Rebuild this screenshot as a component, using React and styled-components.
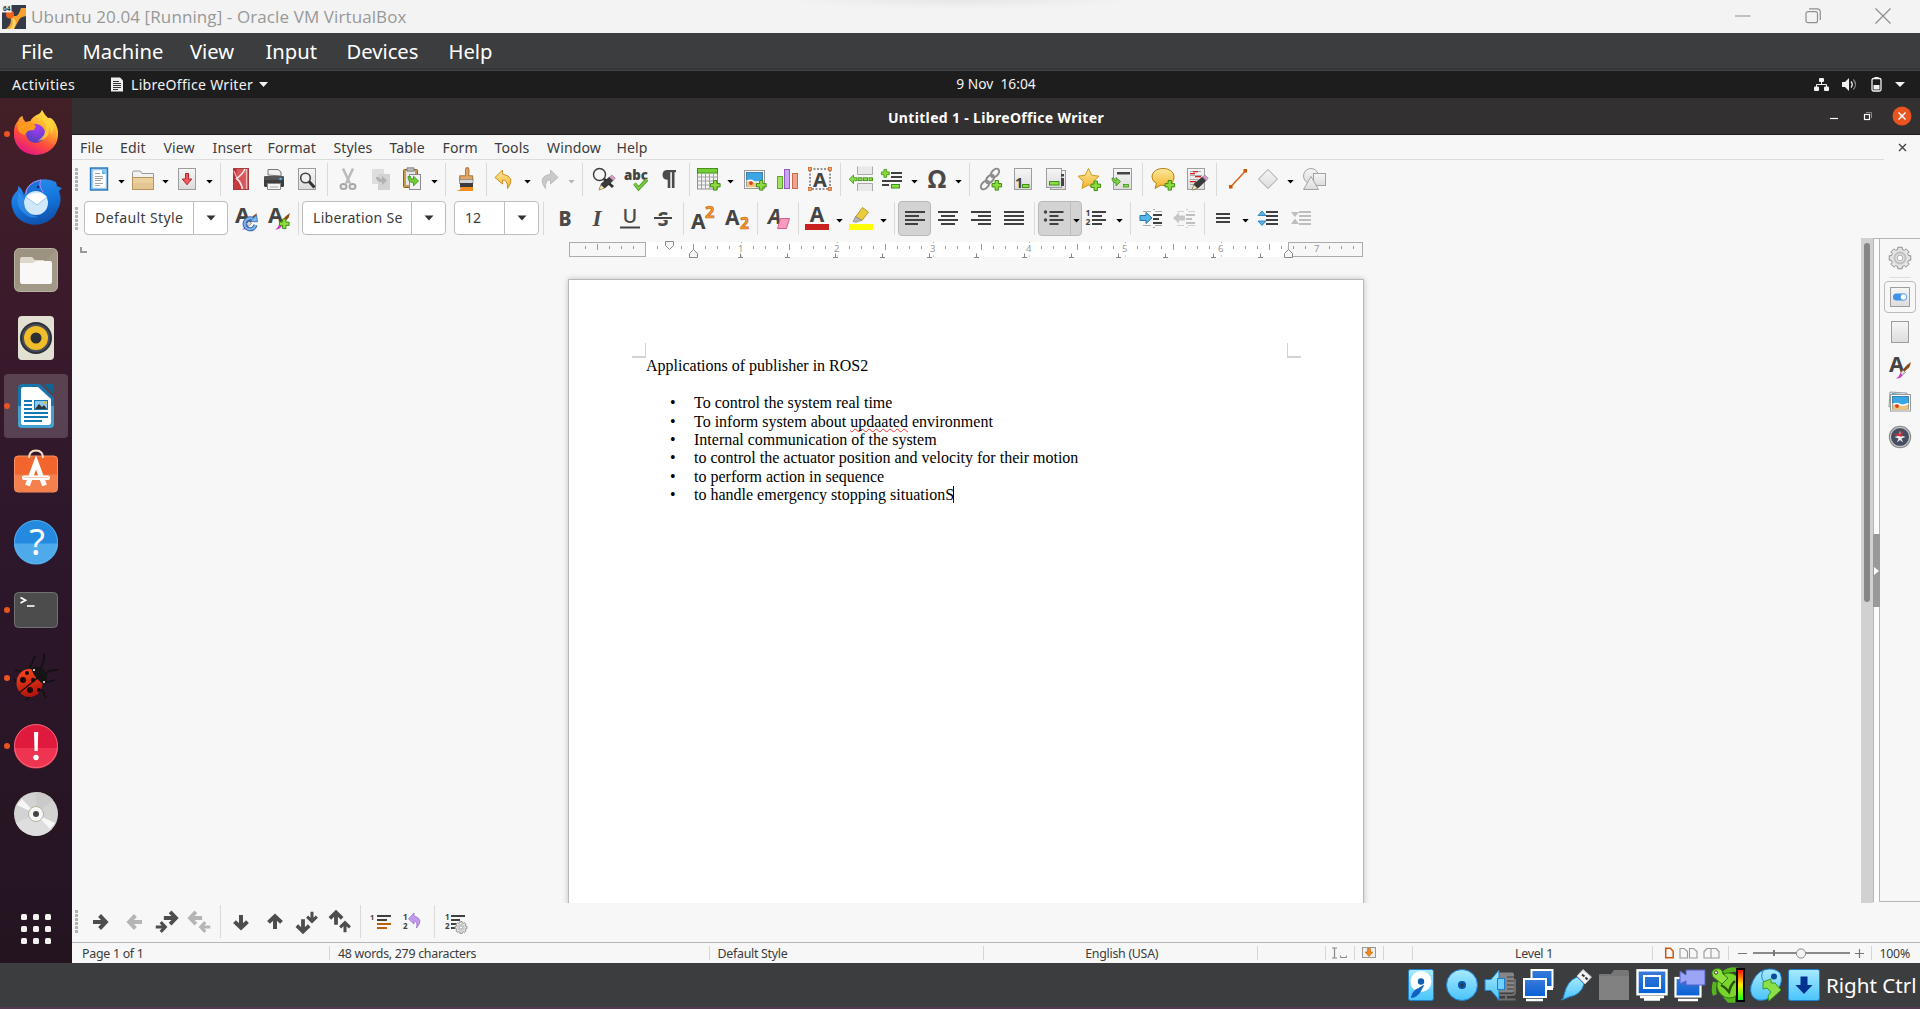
import React from "react";
import styled, { createGlobalStyle, css } from "styled-components";

const GlobalStyle = createGlobalStyle`
  *, *::before, *::after { box-sizing: border-box; }
  html, body { margin: 0; padding: 0; width: 1920px; height: 1009px; overflow: hidden; }
  svg { display: block; overflow: visible; flex: none; }
`;

const UI = `"Noto Sans", "Open Sans", sans-serif`;
const SERIF = `"Liberation Serif", "Times New Roman", serif`;

/* ---------- window frame ---------- */

const Screen = styled.div`
  width: 1920px;
  height: 1009px;
  display: flex;
  flex-direction: column;
  overflow: hidden;
  background: #3c3d3f;
  font-family: ${UI};
  white-space: nowrap;
`;

const HostTitle = styled.header`
  height: 33px;
  flex: none;
  display: flex;
  align-items: center;
  padding: 0 29px 0 2px;
  background: radial-gradient(ellipse 175px 9px at 960px 0, #e7e7e7, #f3f3f3);
  color: #989898;
`;

const HostTitleText = styled.span`
  flex: 1;
  margin-left: 5px;
  font: 17px/24px "Open Sans", ${UI};
  letter-spacing: 0.1px;
`;

const HostButtons = styled.div`
  display: flex;
  gap: 54px;
  margin-top: -2px;
`;

const HostMenu = styled.nav`
  height: 38px;
  flex: none;
  display: flex;
  align-items: center;
  padding: 0 0 2px 21px;
  background: linear-gradient(#3b3d3f 35px, #343637 35px, #343637 37px, #454443 37px);
  color: #fff;
`;

const HostMenuItem = styled.span`
  width: ${(p) => p.$w}px;
  font-size: 20.2px;
  line-height: 28px;
`;

const TopBar = styled.div`
  height: 27px;
  flex: none;
  display: grid;
  grid-template-columns: 1fr auto 1fr;
  align-items: center;
  background: #1d1d1d;
  color: #f2f2f2;
  font-size: 13.8px;
`;

const TopLeft = styled.div`
  display: flex;
  align-items: center;
  padding-left: 12px;
`;

const Activities = styled.span`
  width: 99px;
  font-size: 14.2px;
  letter-spacing: 0.4px;
`;

const AppName = styled.span`
  margin: 0 6px 0 8px;
  font-size: 14.1px;
  letter-spacing: 0.27px;
`;

const Clock = styled.span`
  white-space: pre;
  padding-left: 72px;
  margin-top: -2px;
`;

const TopRight = styled.div`
  display: flex;
  justify-content: flex-end;
  align-items: center;
  gap: 13.5px;
  padding-right: 15px;
`;

const Guest = styled.div`
  height: 865px;
  flex: none;
  display: flex;
`;

/* ---------- dock ---------- */

const Dock = styled.aside`
  width: 72px;
  flex: none;
  display: flex;
  flex-direction: column;
  align-items: center;
  gap: 4px;
  padding-top: 4px;
  background: linear-gradient(#431f27, #3a1a2b 25%, #2d172b 52%, #241420);
`;

const DockItem = styled.div`
  width: 64px;
  height: 64px;
  display: flex;
  align-items: center;
  justify-content: center;
  border-radius: 4px;
  background: ${(p) => (p.$active ? "rgba(255,255,255,0.18)" : "transparent")};
  position: relative;
  ${(p) =>
    p.$running &&
    css`
      &::before {
        content: "";
        position: absolute;
        left: 0;
        top: 29px;
        width: 6px;
        height: 6px;
        border-radius: 3px;
        background: #e95420;
      }
    `}
`;

const AppsGrid = styled.div`
  display: grid;
  grid-template-columns: repeat(3, 6px);
  gap: 6px;
  margin: auto 0 19px;
`;

const AppsDot = styled.i`
  height: 6px;
  border-radius: 1.5px;
  background: #f3f1ef;
`;

/* ---------- writer window ---------- */

const Writer = styled.main`
  width: 1848px;
  display: flex;
  flex-direction: column;
  background: #f7f7f7;
  color: #3c3c3c;
`;

const WriterTitle = styled.div`
  height: 37px;
  flex: none;
  display: grid;
  grid-template-columns: 1fr auto 1fr;
  align-items: center;
  background: #333031;
  border-bottom: 1px solid #1e1d1d;
  color: #fff;
`;

const WriterName = styled.span`
  grid-column: 2;
  margin-top: 2px;
  font-size: 14px;
  font-weight: 700;
  letter-spacing: 0.33px;
`;

const WriterButtons = styled.div`
  display: flex;
  justify-content: flex-end;
  align-items: center;
  padding-right: 8px;
`;

const MenuBar = styled.nav`
  height: 24px;
  flex: none;
  display: flex;
  align-items: center;
  padding-left: 8px;
`;

const MenuItem = styled.span`
  width: ${(p) => p.$w}px;
  font-size: 14.1px;
  line-height: 22px;
  letter-spacing: 0.1px;
  margin-top: 2px;
`;

const MenuClose = styled.span`
  margin-left: auto;
  padding-right: 13px;
`;

const MenuRule = styled.div`
  width: 1812px;
  height: 1px;
  flex: none;
  background: #dcdcdc;
`;

const Toolbar = styled.div`
  height: ${(p) => p.$h}px;
  flex: none;
  display: flex;
  align-items: center;
  padding: 0 0 ${(p) => p.$pb || 0}px 3px;
`;

const Slot = styled.span`
  margin-left: ${(p) => p.$gap}px;
  display: flex;
  align-items: center;
  justify-content: center;
`;

const Grip = styled.span`
  width: 3px;
  height: 23px;
  background: repeating-linear-gradient(#b4b4b4 0 3px, transparent 3px 4px);
`;

const Divider = styled.span`
  width: 1px;
  height: 33px;
  background: #dadada;
`;

const Combo = styled.div`
  width: ${(p) => p.$w}px;
  height: 34px;
  display: flex;
  border: 1px solid #bdbdbd;
  border-radius: 4px;
  background: #fff;
  overflow: hidden;
`;

const ComboValue = styled.span`
  flex: 1;
  padding-left: 10px;
  font-size: 14.1px;
  line-height: 32px;
  letter-spacing: ${(p) => p.$track || 0}px;
  border-right: 1px solid #bdbdbd;
`;

const ComboArrow = styled.span`
  width: 33px;
  display: flex;
  align-items: center;
  justify-content: center;
`;

const Pressed = styled.span`
  width: ${(p) => p.$w}px;
  height: 35px;
  display: flex;
  align-items: center;
  border: 1px solid #b9b9b9;
  border-radius: 4px;
  background: #d3d3d3;
`;

const PressedPart = styled.span`
  width: ${(p) => p.$w}px;
  height: 33px;
  display: flex;
  align-items: center;
  justify-content: center;
  border-left: ${(p) => (p.$split ? "1px solid #bdbdbd" : "0")};
`;

const Workspace = styled.section`
  height: 665px;
  flex: none;
  display: flex;
`;

const Canvas = styled.div`
  flex: 1;
  display: flex;
  flex-direction: column;
  overflow: hidden;
`;

const RulerRow = styled.div`
  height: 41px;
  flex: none;
  display: flex;
  padding-left: 8px;
`;

const Page = styled.article`
  width: 796px;
  height: 640px;
  flex: none;
  margin-left: 496px;
  padding: 63px 62px 0 63px;
  background: #fff;
  border: 1px solid #b8b8b8;
  box-shadow: 0 0 6px rgba(0, 0, 0, 0.22);
  color: #000;
  font: 16px/18.4px ${SERIF};
`;

const Corners = styled.div`
  display: flex;
  justify-content: space-between;
  height: 15px;
`;

const Corner = styled.i`
  width: 14px;
  height: 15px;
  border: 0 solid #d2d2d2;
  border-bottom-width: 2px;
  ${(p) => (p.$right ? "border-left-width: 1px;" : "border-right-width: 1px;")}
`;

const Heading = styled.p`
  margin: -1px 0 18.8px 14px;
`;

const Bullets = styled.ul`
  margin: 0;
  padding: 0;
  list-style: none;
`;

const Bullet = styled.li`
  display: flex;
  padding-left: 38px;
  &::before {
    content: "•";
    width: 24px;
  }
`;

const Misspelt = styled.span`
  text-decoration: underline wavy #e33 1px;
  text-decoration-skip-ink: none;
  text-underline-offset: 1px;
`;

const Caret = styled.i`
  display: inline-block;
  width: 1px;
  height: 17px;
  margin-left: -1px;
  background: #000;
`;

const ScrollTrack = styled.div`
  width: 12px;
  padding: 5px 3px 0;
  background: #d1d1d1;
`;

const ScrollThumb = styled.div`
  height: 359px;
  border-radius: 3px;
  background: #868686;
`;

const Splitter = styled.div`
  width: 7px;
  height: 664px;
  display: flex;
  align-items: center;
  background: #fcfcfc;
  border: 1px solid #b5b5b5;
  border-width: 1px 1px 0;
`;

const SplitHandle = styled.div`
  width: 7px;
  height: 73px;
  flex: none;
  margin: 0 -1px;
  display: flex;
  align-items: center;
  background: #999;
`;

const Sidebar = styled.aside`
  width: 40px;
  height: 664px;
  display: flex;
  flex-direction: column;
  align-items: center;
  padding-top: 7px;
  border: solid #b5b5b5;
  border-width: 1px 0;
`;

const SideRule = styled.i`
  width: 22px;
  height: 1px;
  margin: 7px 0 3px;
  background: #dedede;
`;

const SideButton = styled.span`
  width: 32px;
  height: ${(p) => p.$h}px;
  flex: none;
  display: flex;
  align-items: center;
  justify-content: center;
  border: 1px solid ${(p) => (p.$on ? "#bcbcbc" : "transparent")};
  border-radius: 4px;
`;

const StatusBar = styled.footer`
  height: 21px;
  flex: none;
  display: flex;
  align-items: center;
  border-top: 1px solid #b5b5b5;
`;

const StatusCell = styled.span`
  width: ${(p) => p.$w}px;
  height: 14px;
  display: flex;
  align-items: center;
  justify-content: ${(p) => (p.$center ? "center" : "flex-start")};
  padding-left: ${(p) => p.$pl || 0}px;
  font-size: 12.4px;
  letter-spacing: -0.28px;
  border-right: ${(p) => (p.$last ? "0" : "1px solid #d6d6d6")};
`;

const HostStatus = styled.footer`
  height: 46px;
  flex: none;
  display: flex;
  align-items: center;
  justify-content: flex-end;
  gap: 6px;
  padding: 0 3px 0 0;
  background: #3c3d3f;
  border-bottom: 2px solid #523b50;
`;

const HostKey = styled.span`
  width: 91px;
  color: #fff;
  font-size: 20.6px;
  line-height: 28px;
`;

/* ---------- shared drawing pieces ---------- */

const Svg = ({ s = 24, w, h, children, vb }) => (
  <svg width={w || s} height={h || s} viewBox={vb || `0 0 ${w || s} ${h || s}`} fill="none">
    {children}
  </svg>
);

const GradientSheet = styled.svg`
  position: absolute;
`;

const Defs = () => (
  <GradientSheet width="0" height="0">
    <defs>
      <linearGradient id="paper" x1="0" y1="0" x2="0" y2="1">
        <stop stopColor="#f6f6f6" /><stop offset="1" stopColor="#dcdcdc" />
      </linearGradient>
      <linearGradient id="blue" x1="0" y1="0" x2="0" y2="1">
        <stop stopColor="#a8e9ff" /><stop offset="1" stopColor="#48c4fb" />
      </linearGradient>
      <linearGradient id="deep" x1="0" y1="0" x2="0" y2="1">
        <stop stopColor="#3b7bd9" /><stop offset="1" stopColor="#0560d6" />
      </linearGradient>
      <linearGradient id="gold" x1="0" y1="0" x2="0" y2="1">
        <stop stopColor="#fce89b" /><stop offset="1" stopColor="#f5b32c" />
      </linearGradient>
      <linearGradient id="fire" x1="0.8" y1="0" x2="0.3" y2="1">
        <stop stopColor="#fff14f" /><stop offset=".35" stopColor="#ffb02e" />
        <stop offset=".68" stopColor="#ff4a3d" /><stop offset="1" stopColor="#e3148a" />
      </linearGradient>
      <radialGradient id="globe" cx=".6" cy=".2" r=".9">
        <stop stopColor="#a23cf5" /><stop offset="1" stopColor="#4d3fb5" />
      </radialGradient>
      <linearGradient id="bird" x1=".3" y1="0" x2=".6" y2="1">
        <stop stopColor="#2c8df0" /><stop offset=".5" stopColor="#1475dc" /><stop offset="1" stopColor="#0f4fa8" />
      </linearGradient>
      <linearGradient id="meter" x1="0" y1="0" x2="0" y2="1">
        <stop stopColor="#f00" /><stop offset=".5" stopColor="#fe0" /><stop offset="1" stopColor="#0f2" />
      </linearGradient>
      <linearGradient id="lady" x1="0" y1="0" x2=".3" y2="1">
        <stop stopColor="#ff4a1f" /><stop offset="1" stopColor="#b3160c" />
      </linearGradient>
    </defs>
  </GradientSheet>
);

const Arrow = ({ color = "#000" }) => (
  <Svg w={9} h={9}><path d="M1.3 5h6.4L4.5 8.6z" fill={color} /></Svg>
);
const ComboTri = () => (
  <Svg w={10} h={6}><path d="M.5.5h9L5 5.5z" fill="#333" /></Svg>
);
const Plus = ({ x = 13, y = 13 }) => (
  <path transform={`translate(${x} ${y})`} d="M3.6.5h3.3v3.1h3.2v3.3H6.9v3.2H3.6V6.9H.5V3.6h3.1z" fill="#8fdc3e" stroke="#3c8f12" />
);
const T = ({ x, y, size, fill = "#444", anchor = "start", weight = 700, children, font = UI, ...rest }) => (
  <text x={x} y={y} fontSize={size} fill={fill} fontWeight={weight} textAnchor={anchor} fontFamily={font} {...rest}>{children}</text>
);
const Sheet = ({ x = 3, y = 1, w = 18, h = 22 }) => (
  <rect x={x + 0.5} y={y + 0.5} width={w - 1} height={h - 1} fill="url(#paper)" stroke="#9d9d9d" />
);
const Pencil = ({ x = 0, y = 0 }) => (
  <g transform={`translate(${x} ${y})`}>
    <path d="M6.500 18l2.500-6.500L17 5l3.500 3.500-7.500 7z" fill="#3b3b3b" stroke="#222" strokeWidth=".6" />
    <path d="M6.500 18l2-5 3.200 3z" fill="#f4e3a1" />
    <path d="M17 5l2.500-2 3.300 3.300-2.300 2.200z" fill="#d79cc8" stroke="#8d6485" strokeWidth=".5" />
  </g>
);
const Lines = ({ rows, color = "#404040", t = 2 }) =>
  rows.map(([x, y, w], i) => <rect key={i} x={x} y={y} width={w} height={t} fill={color} />);
const Brush = () => (
  <g>
    <path d="M23 7l-1.500 5-7 6.500-1.800-1.800L19 10z" fill="#8d4a12" />
    <path d="M15 15l2.500 2.400-3 2.800-2.300-2z" fill="#d8d8d8" stroke="#666" strokeWidth=".6" />
    <path d="M12.500 18l2 2.200q-2 3.600-6.500 3.200 2.600-1 4.500-5.400z" fill="#c83ec2" />
  </g>
);
const Scene = ({ x, y, w, h }) => (
  <g>
    <rect x={x} y={y} width={w} height={h} fill="#fafafa" stroke="#999" />
    <rect x={x + 2} y={y + 2} width={w - 4} height={h - 4} fill="#3aa6e4" stroke="#2b6f9e" strokeWidth=".8" />
    <path d={`M${x + 2} ${y + h * 0.62}q4-2 7 0t${w - 11}-1v${h * 0.48 - 2}h${-(w - 4)}z`} fill="#f1c27c" />
    <path d={`M${x + 2} ${y + h * 0.6}q4-2 7 0t${w - 11}-1`} stroke="#fff" strokeWidth="1.4" />
    <circle cx={x + 6.5} cy={y + h * 0.7} r="1.9" fill="#dc3d1d" />
  </g>
);
const BigArrow = ({ color = "#4d4d4d", rot = 0, x = 0, y = 0, k = 1 }) => (
  <g transform={`translate(${x} ${y}) rotate(${rot} 12 12) translate(${12 - 12 * k} ${12 - 12 * k}) scale(${k})`}>
    <path d="M5 12h11M11.600 5.500L17.800 12l-6.200 6.500" stroke={color} strokeWidth="4" strokeLinejoin="miter" />
  </g>
);
const cogPath = (cx, cy, r) => {
  const points = [];
  for (let i = 0; i < 8; i += 1) {
    [[-0.27, 0.8], [-0.2, 1], [0.2, 1], [0.27, 0.8]].forEach(([da, k]) => {
      const a = (i * Math.PI) / 4 + da;
      points.push(`${(cx + r * k * Math.cos(a)).toFixed(2)} ${(cy + r * k * Math.sin(a)).toFixed(2)}`);
    });
  }
  return `M${points.join("L")}z`;
};
const Cog = ({ cx, cy, r }) => (
  <g>
    <path d={cogPath(cx, cy, r)} fill="#e4e4e4" stroke="#909090" strokeLinejoin="round" />
    <circle cx={cx} cy={cy} r={r * 0.5} stroke="#bdbdbd" strokeWidth={r * 0.16} />
    <circle cx={cx} cy={cy} r={r * 0.26} fill="#fff" stroke="#999" strokeWidth=".8" />
  </g>
);

/* ---------- toolbar icons ---------- */

const paragraph = (rows) => <Lines rows={rows} />;

const ICONS = {
  new: (<>
    <rect x="3.500" y="1" width="17" height="22" fill="#8fc7ef" stroke="#2576b8" strokeWidth="1.400" />
    <path d="M6 3h9l4 4v14H6z" fill="#fff" stroke="#b8d3e6" strokeWidth=".6" /><path d="M15 3v4h4z" fill="#58b6ea" />
    <Lines t={1} color="#a3a3a3" rows={[[8, 6, 5], [8, 9, 8], [8, 11, 8], [8, 13, 6], [8, 16, 8], [8, 18, 5]]} />
  </>),
  open: (<>
    <path d="M1.500 22.500V5.500l1-1.500h7l1.500 2.500h11.500v16z" fill="#f1f1f1" stroke="#999" />
    <rect x="1.500" y="10.500" width="21" height="12" fill="#ecd0a0" stroke="#b8935a" /><path d="M2 16h20v6H2z" fill="#e3c08a" opacity=".7" />
  </>),
  save: (<><Sheet /><path d="M10.500 6.500h3v5.500h3.200L12 17.800 7.300 12h3.200z" fill="#ef5b61" stroke="#b5262c" /></>),
  pdf: (<>
    <rect x="4.500" y="1.500" width="15" height="21" fill="#d9565a" stroke="#a73b3b" />
    <path d="M5 2h2.500v10L5 16z" fill="#b92a30" /><path d="M5 22V16l4-4 4 10z" fill="#c63a40" />
    <path d="M16 2q-2 5-8.500 9.500Q12 15 13.500 22" stroke="#fbe7e7" strokeWidth="1.600" /><path d="M5 4l3 7.500M17.500 2v20" stroke="#f2b9ba" strokeWidth="1.300" />
  </>),
  print: (<>
    <path d="M6 8V2.500h10L19 5v4z" fill="#f0f0f0" stroke="#777" /><rect x="2" y="9" width="20" height="11" rx="1.500" fill="#3d3d3d" /><rect x="2" y="9" width="20" height="4" rx="1.500" fill="#555" />
    <circle cx="18.500" cy="12" r="1.200" fill="#4db8ff" /><path d="M5.500 16.500h13v6h-13z" fill="#f4f4f4" stroke="#888" /><path d="M8 20h8" stroke="#aaa" />
  </>),
  preview: (<><Sheet /><circle cx="10.500" cy="11" r="4.800" stroke="#444" strokeWidth="1.600" fill="#f1f1f1" /><path d="M14 14.500L19.500 20.500" stroke="#333" strokeWidth="3" /></>),
  cut: (<g stroke="#a9a9a9" strokeWidth="1.200"><path d="M7 1.500l7 15M17 1.500l-7 15" stroke="#bcbcbc" strokeWidth="2.600" /><ellipse cx="7.500" cy="19.500" rx="3" ry="2.600" fill="#f0f0f0" strokeWidth="2" /><ellipse cx="16.500" cy="19.500" rx="3" ry="2.600" fill="#f0f0f0" strokeWidth="2" /></g>),
  copy: (<><rect x="3" y="2" width="12" height="15" fill="#dedede" /><rect x="9" y="7" width="12" height="16" fill="#d3d3d3" /><path d="M7 10q0 5 6 5v3l5-4.500L13 9v3q-3 0-3-2z" fill="#b0b0b0" /></>),
  paste: (<>
    <rect x="3.500" y="2.500" width="14" height="18" rx="1" fill="#c99b50" stroke="#8a6120" /><rect x="6" y="4" width="9" height="14" fill="#e8e8e8" /><path d="M7 .8h7v3.400H7z" fill="#bbb" stroke="#777" strokeWidth=".8" />
    <rect x="9.500" y="7.500" width="11" height="15" fill="#f2f2f2" stroke="#8b8b8b" /><path d="M8 9.500q0 6 5.500 6.300v3l5-4.800-5-4.800v3q-3 .3-3-2.700z" fill="#70cf33" stroke="#2f8a15" strokeWidth=".8" />
  </>),
  brush: (<>
    <path d="M12 .8h2.500q1 2 .2 8h4v5h-13v-5h6q-.7-6 .3-8z" fill="#e2a765" stroke="#9d6b2c" strokeWidth=".9" /><rect x="5.500" y="12.500" width="13.500" height="4" fill="#d5d5d5" stroke="#777" strokeWidth=".6" /><rect x="6" y="16" width="13" height="4.500" fill="#3c3c3c" />
    <path d="M2 24q5-1 5-4h12v4z" fill="#f58c22" />
  </>),
  undo: (<path d="M10.500 3L3 10.500l7.500 6.500v-4q5.500-.5 5 8.500 9-11.500-5-14.500z" fill="url(#gold)" stroke="#c58616" strokeWidth=".9" strokeLinejoin="round" />),
  redo: (<path d="M13.500 3l7.500 7.500-7.500 6.500v-4q-5.500-.5-5 8.500-9-11.500 5-14.500z" fill="#c9c9c9" stroke="#b9b9b9" strokeWidth=".9" strokeLinejoin="round" />),
  find: (<><circle cx="7.500" cy="7.500" r="6" stroke="#3f3f3f" strokeWidth="1.500" /><path d="M12 12l9 8" stroke="#333" strokeWidth="3" /><Pencil x={0.5} y={5} /></>),
  abc: (<><T x="0" y="13" size="13.500" textLength="24" lengthAdjust="spacingAndGlyphs" fontWeight="900">abc</T><path d="M10.500 16.500l4 5 8.500-9" stroke="#4f9e28" strokeWidth="3.600" /><path d="M10.500 16.500l4 5 8.500-9" stroke="#7ed246" strokeWidth="1.800" /></>),
  pilcrow: (<path d="M9.500 3H19v2.300h-1.500V21h-2.600V5.300h-1.600V21h-2.600v-8.200Q5.500 12.500 5.500 8t4-5z" fill="#4b4b4b" />),
  table: (<>
    <rect x=".5" y="1.500" width="20" height="20.500" fill="#f3f3f3" stroke="#8f8f8f" /><rect x=".5" y="1.500" width="20" height="4.500" fill="#79cf3a" stroke="#3f8f17" />
    <path d="M.5 10h20M.5 14h20M.5 18h20M4.500 1.500V22M8.500 1.500V22M12.500 1.500V22M16.500 1.500V22" stroke="#9a9a9a" strokeWidth=".9" /><Plus />
  </>),
  image: (<><Scene x={1.5} y={3.5} w={20} h={18} /><Plus /></>),
  chart: (<g strokeWidth="1"><rect x="1.500" y="9.500" width="5" height="12" fill="#a0e368" stroke="#5da72b" /><rect x="8.500" y="2.500" width="5" height="19" fill="#cda4f4" stroke="#8f5ac7" /><rect x="16.500" y="6.500" width="5" height="15" fill="#f0a48c" stroke="#c96750" /></g>),
  textbox: (<><rect x="2" y="2" width="20" height="20" stroke="#333" strokeDasharray="2 1.500" /><T x="12" y="19.500" size="20" anchor="middle">A</T>
    <g fill="#f6a063" stroke="#c96a2a" strokeWidth=".8"><rect x=".5" y=".5" width="3" height="3" /><rect x="20.500" y=".5" width="3" height="3" /><rect x=".5" y="20.500" width="3" height="3" /><rect x="20.500" y="20.500" width="3" height="3" /></g></>),
  pagebreak: (<>
    <path d="M8.500-.5v8h15v-8M8.500 24v-7.500h15V24" fill="#e9e9e9" stroke="#aaa" /><path d="M4.500 8v2.700H7.800v3H4.500v3L.2 12.200z" fill="#8ddc4a" stroke="#3f9117" strokeWidth=".8" />
    <g fill="#8ddc4a" stroke="#3f9117" strokeWidth=".9"><rect x="9" y="10.800" width="4" height="2.800" /><rect x="14.500" y="10.800" width="4" height="2.800" /><rect x="20" y="10.800" width="3.500" height="2.800" /></g>
  </>),
  field: (<><Lines rows={[[10, 5, 11], [10, 9, 11], [1, 13, 20], [1, 17, 7]]} /><g transform="translate(0 2) scale(.82)"><Plus x={0} y={0} /></g><rect x="10.500" y="17.500" width="8" height="3.500" fill="#8ddc4a" stroke="#3f9117" /></>),
  omega: (<T x="12" y="21" size="25" anchor="middle" fill="#4a4a4a">Ω</T>),
  link: (<g><g stroke="#8b8b8b" strokeWidth="2"><ellipse cx="16" cy="6" rx="5" ry="3.200" transform="rotate(-48 16 6)" /><ellipse cx="11" cy="12" rx="5" ry="3" transform="rotate(-48 11 12)" /><ellipse cx="6" cy="18" rx="5" ry="3.200" transform="rotate(-48 6 18)" /></g><Plus x={12.5} y={13} /></g>),
  footnote: (<><Sheet /><T x="4" y="21" size="14.500">1</T><rect x="11.500" y="17.500" width="6.500" height="3" fill="#8ddc4a" stroke="#3f9117" /></>),
  endnote: (<><Sheet x={6} y={3} w={16} h={20} /><Sheet x={2} y={1} w={16} h={20} /><rect x="5.500" y="14.500" width="9.500" height="3.500" fill="#8ddc4a" stroke="#3f9117" /><rect x="17" y="11" width="3" height="8" fill="#444" /><rect x="17" y="7" width="3" height="2.500" fill="#444" /></>),
  bookmark: (<><path d="M11.500 1.500l3.200 6.700 7.300 1-5.300 5.100 1.300 7.200-6.500-3.500L5 21.500l1.300-7.200L1 9.200l7.300-1z" fill="url(#gold)" stroke="#d09a20" strokeLinejoin="round" /><Plus x={13.5} y={13.5} /></>),
  crossref: (<><Sheet x={3} y={1} w={19} h={22} /><rect x="7" y="5" width="13" height="2.500" fill="#444" /><path d="M2 11q0 5 4 5v3l4.500-4.500L6 10.500v3q-2 0-2-2.500z" fill="#7dcf45" stroke="#3f8f20" strokeWidth=".8" /><rect x="13.500" y="17.500" width="5" height="2.500" fill="#8ddc4a" stroke="#3f9117" strokeWidth=".8" /></>),
  comment: (<><path d="M12 1.500c6 0 11 3 11 8.500s-4 8.500-9 8.500c-1.800 0-3 0-4-.5L4 21.500l1.500-5Q1 14 1 10c0-5.500 5-8.500 11-8.500z" fill="url(#gold)" stroke="#b98213" /><Plus x={13.5} y={13} /></>),
  track: (<><Sheet x={2} y={1} w={18} h={22} /><Lines t={1} color="#aaa" rows={[[5, 4, 11], [5, 8, 12], [5, 12, 8], [5, 17, 4]]} /><Lines t={1.3} color="#d42222" rows={[[8, 4, 5], [5, 6, 5], [10, 9, 6], [5, 14, 6]]} /><Pencil x={0.5} y={5} /></>),
  line: (<><path d="M4.500 20L19 4.500" stroke="#d35f10" strokeWidth="1.400" /><rect x="3" y="18" width="3.500" height="3.500" fill="#cf5600" /><rect x="17.500" y="2" width="3.500" height="3.500" fill="#cf5600" /></>),
  diamond: (<path d="M12 2.500l9.500 9.500-9.500 9.500L2.500 12z" fill="url(#paper)" stroke="#9d9d9d" />),
  shapes: (<g fill="url(#paper)" stroke="#a3a3a3"><circle cx="9" cy="9" r="7.500" /><rect x="11.500" y="6.500" width="12" height="12" /><path d="M9 9.500l7.500 13h-15z" /></g>),

  updateStyle: (<><T x="1" y="16.500" size="22">A</T><Brush /><path d="M19.500 13.500A5.500 5.500 0 1 0 21.500 19" stroke="#2f66b4" strokeWidth="4" /><path d="M19.500 13.500A5.500 5.500 0 1 0 21.500 19" stroke="#82b6ef" strokeWidth="2" /><path d="M16 15.500l7.500.3L22.500 9z" fill="#82b6ef" stroke="#2f66b4" strokeWidth=".8" /></>),
  newStyle: (<><T x="1" y="16.500" size="22">A</T><Brush /><Plus x={12} y={12.5} /></>),
  bold: (<T x="12" y="19.500" size="21" anchor="middle" fill="#4a4a4a" fontWeight="800" transform="translate(.8 0) scale(.93 1)">B</T>),
  italic: (<T x="12" y="20" size="23" anchor="middle" fill="#4a4a4a" font={SERIF} fontStyle="italic">I</T>),
  underline: (<><T x="12" y="17" size="20" anchor="middle" fill="#4a4a4a" weight={500}>U</T><path d="M2 21.500h20" stroke="#444" strokeWidth="2" /></>),
  strike: (<><T x="12" y="19.500" size="20" anchor="middle" fill="#4a4a4a">S</T><path d="M3 12h18" stroke="#f7f7f7" strokeWidth="4" /><path d="M3 12h18" stroke="#444" strokeWidth="2" /></>),
  sup: (<><T x="0" y="23" size="21">A</T><T x="14" y="12" size="16.500" fill="#f49a34" stroke="#c96a10" strokeWidth=".7">2</T></>),
  sub: (<><T x="0" y="19" size="21">A</T><T x="15" y="23" size="15.500" fill="#f49a34" stroke="#c96a10" strokeWidth=".7">2</T></>),
  clear: (<><T x="1" y="18" size="21" fontStyle="italic">A</T><path d="M13.500 12.500h9L19.500 22.500h-9z" fill="#f79ac0" stroke="#d8608f" strokeLinejoin="round" /></>),
  fontColor: (<><T x="12" y="15.500" size="21" anchor="middle">A</T><rect x="0" y="18" width="24" height="6" fill="#c9211e" /></>),
  highlight: (<><path d="M6.500 11l7-9.500 6 4.500-6.500 8.500z" fill="#eccb3c" stroke="#a8842a" strokeWidth=".8" /><path d="M6.500 10.500L4 15.500l3 .8 6-2z" fill="#b5b5b5" stroke="#777" strokeWidth=".6" /><rect x="0" y="18" width="24" height="6" fill="#ff0" /></>),
  left: paragraph([[2, 5, 20], [2, 9, 14], [2, 13, 20], [2, 17, 13]]),
  center: paragraph([[2, 5, 20], [5, 9, 14], [2, 13, 20], [5, 17, 14]]),
  right: paragraph([[2, 5, 20], [9, 9, 13], [2, 13, 20], [9, 17, 13]]),
  justify: paragraph([[2, 5, 20], [2, 9, 20], [2, 13, 20], [2, 17, 20]]),
  bullets: (<g transform="translate(-1.500 0)"><Lines rows={[[8, 5, 14], [8, 9, 9], [8, 13, 14], [8, 17, 9]]} /><circle cx="4" cy="6" r="1.700" fill="#444" /><circle cx="4" cy="14" r="1.700" fill="#444" /></g>),
  numbers: (<><Lines rows={[[8, 5, 14], [8, 9, 10], [8, 13, 14], [8, 17, 10]]} /><T x="1.500" y="10" size="8.500">1</T><T x="1.500" y="19" size="8.500">2</T></>),
  indent: (<><Lines t={1} color="#aaa" rows={[[4, 5, 8], [4, 19, 8], [16, 5, 7], [16, 19, 7], [14, 3, 2], [14, 21, 2]]} /><Lines rows={[[14, 8, 9], [14, 12, 6], [14, 16, 9]]} /><path d="M1 9.500h6v-3l6 5.500-6 5.500v-3H1z" fill="#56b5e9" stroke="#2276ad" /></>),
  outdent: (<g opacity=".5"><Lines t={1} color="#aaa" rows={[[5, 5, 7], [5, 19, 7], [16, 5, 7], [16, 19, 7], [14, 3, 2], [14, 21, 2]]} /><Lines color="#888" rows={[[14, 8, 9], [14, 12, 6], [14, 16, 9]]} /><path d="M13 9.500H7v-3L1 12l6 5.500v-3h6z" fill="#999" /></g>),
  spacing: paragraph([[5, 7, 14], [5, 11, 14], [5, 15, 14]]),
  incSpace: (<><Lines rows={[[10, 5, 12], [10, 9, 12], [10, 13, 12], [10, 17, 12]]} /><path d="M6 5l4 4.500H2zM6 19.500l4-4.500H2z" fill="#56b5e9" stroke="#2276ad" strokeWidth=".8" /></>),
  decSpace: (<g opacity=".6"><Lines color="#999" rows={[[10, 5, 12], [10, 9, 12], [10, 13, 12], [10, 17, 12]]} /><path d="M2 6h8l-4 5zM2 18h8l-4-5.500z" fill="#999" /></g>),

  demote: <BigArrow />,
  promote: <BigArrow rot={180} color="#b5b5b5" />,
  demoteSub: (<><BigArrow x={4.5} y={-4} k={0.95} /><BigArrow x={-5} y={5} k={0.75} /></>),
  promoteSub: (<><BigArrow rot={180} x={-4.5} y={-4} k={0.95} color="#b5b5b5" /><BigArrow rot={180} x={5} y={5} k={0.75} color="#b5b5b5" /></>),
  moveDown: <BigArrow rot={90} />,
  moveUp: <BigArrow rot={-90} />,
  moveDownSub: (<><BigArrow rot={90} x={-4} y={4} k={0.95} /><BigArrow rot={90} x={5} y={-5} k={0.75} /></>),
  moveUpSub: (<><BigArrow rot={-90} x={-4} y={-4} k={0.95} /><BigArrow rot={-90} x={5} y={5} k={0.75} /></>),
  unnumbered: (<><Lines rows={[[8, 5, 14], [8, 9, 10]]} /><Lines color="#c25c06" rows={[[8, 13, 14], [8, 17, 10]]} /><T x="1" y="10" size="7.500">1</T></>),
  restart: (<><T x="3" y="10" size="8">1</T><T x="3" y="19" size="8">2</T><path d="M14 3L8.500 9l5.500 5v-3q4 .5 2.500 7 8-9-2.500-12z" fill="#c39bee" stroke="#9467c9" strokeWidth=".7" /></>),
  listOptions: (<><Lines rows={[[8, 5, 14], [8, 9, 9], [8, 13, 7], [8, 17, 5]]} /><T x="2" y="10" size="8">1</T><T x="2" y="19" size="8">2</T><Cog cx={18} cy={17.5} r={6} /></>),
};

const TextTool = ({ name }) => <Svg>{ICONS[name]}</Svg>;

/* Each entry is [kind or icon name, space before it]. */
const STANDARD = [
  ["grip", 0], ["new", 9], ["v", 6], ["open", 5], ["v", 6], ["save", 5], ["v", 6], ["|", 6], ["pdf", 8], ["print", 9], ["preview", 9],
  ["|", 8], ["cut", 8], ["copy", 9], ["paste", 7], ["v", 6], ["|", 6], ["brush", 8], ["|", 8], ["undo", 5], ["v", 7], ["redo", 5], ["v-", 6],
  ["|", 6], ["find", 9], ["abc", 8], ["pilcrow", 9], ["|", 8], ["table", 7], ["v", 5], ["image", 8], ["chart", 9], ["textbox", 8], ["|", 8],
  ["pagebreak", 8], ["field", 8], ["v", 5], ["omega", 6], ["v", 5], ["|", 6], ["link", 9], ["footnote", 8], ["endnote", 9], ["bookmark", 9],
  ["crossref", 9], ["|", 8], ["comment", 8], ["track", 10], ["|", 7], ["line", 9], ["diamond", 6], ["v", 6], ["shapes", 7],
];
const FORMAT_A = [["updateStyle", 6], ["newStyle", 9], ["|", 7]];
const FORMAT_B = [
  ["|", 4], ["bold", 9], ["italic", 8], ["underline", 9], ["strike", 9], ["|", 8], ["sup", 7], ["sub", 10], ["|", 8], ["clear", 9], ["|", 7],
  ["fontColor", 6], ["v", 6], ["highlight", 5], ["v", 6], ["|", 6],
];
const FORMAT_C = [["center", 5], ["right", 9], ["justify", 9], ["|", 8]];
const FORMAT_D = [
  ["numbers", 2], ["v", 7], ["|", 6], ["indent", 8], ["outdent", 9], ["|", 8], ["spacing", 6], ["v", 6], ["incSpace", 6], ["decSpace", 9],
];
const NUMBERING = [
  ["grip", 0], ["demote", 10], ["promote", 11], ["demoteSub", 7], ["promoteSub", 10], ["|", 8], ["moveDown", 8], ["moveUp", 10],
  ["moveDownSub", 8], ["moveUpSub", 9], ["|", 8], ["unnumbered", 8], ["restart", 7], ["|", 10], ["listOptions", 8],
];

const Tools = ({ items }) =>
  items.map(([kind, gap], i) => (
    <Slot key={i} $gap={gap}>
      {kind === "grip" ? <Grip /> : kind === "|" ? <Divider /> : kind === "v" ? <Arrow /> : kind === "v-" ? <Arrow color="#b5b5b5" /> : <TextTool name={kind} />}
    </Slot>
  ));

const ComboBox = ({ width, gap, value, track }) => (
  <Slot $gap={gap}>
    <Combo $w={width}>
      <ComboValue $track={track}>{value}</ComboValue>
      <ComboArrow><ComboTri /></ComboArrow>
    </Combo>
  </Slot>
);

/* ---------- ruler ---------- */

const Ruler = () => {
  const ticks = [];
  for (let x = 12 - 72; x < 714; x += 12) {
    if (x === 0 || (x > 0 && x % 96 === 0)) continue;
    const half = ((x % 96) + 96) % 96 === 48;
    ticks.push(<rect key={x} x={76 + x} y={half ? 6 : 8} width="1" height={half ? 6 : 3} fill="#9a9a9a" />);
  }
  return (
    <Svg w={796} h={20}>
      <rect x="77" y="4" width="643" height="15" fill="#fff" />
      <rect x=".5" y="4.500" width="76" height="14" stroke="#ababab" />
      <rect x="719.500" y="4.500" width="74" height="14" stroke="#ababab" />
      {ticks}
      {[1, 2, 3, 4, 5, 6, 7].map((n) => (
        <g key={n}>
          <T x={75.7 + n * 96} y="14" size="9.500" weight={400} fill="#999" anchor="middle">{n}</T>
          <path d={`M${76.5 + n * 96} 4v1M${76.5 + n * 96} 17.500v1`} stroke="#aaa" />
        </g>
      ))}
      {Array.from({ length: 12 }, (_, i) => Math.round(171 + i * 47.27)).map((x) => (
        <path key={x} d={`M${x + 0.5} 15.500v3.500M${x - 2} 19.500h5`} stroke="#888" />
      ))}
      <path d="M96.500 3.500h8v4l-4 4-4-4z" fill="#f7f7f7" stroke="#888" />
      <path d="M120.500 19.500h8v-4l-4-4-4 4z" fill="#f7f7f7" stroke="#888" />
      <path d="M715.500 19.500h8v-4l-4-4-4 4z" fill="#f7f7f7" stroke="#888" />
    </Svg>
  );
};

const RulerSlot = styled.div`
  margin-left: 482px;
`;
const TabKind = styled.i`
  width: 7px;
  height: 6px;
  margin-top: 9px;
  border: solid #999;
  border-width: 0 0 2px 2px;
`;

/* ---------- dock icons ---------- */

const DOCK = [
  { id: "firefox", running: true, art: (<>
    <path d="M28-2q2 5 6 8 3-1 6 3 5 8 4 15a22 20 0 0 1-44-2Q-.500 13 4 9q1-4 4.500-5 0 3 3 6l5-1q1-3 6-6 4-1 5.500-5z" fill="url(#fire)" />
    <circle cx="21.500" cy="21.500" r="9.500" fill="url(#globe)" />
    <path d="M4 10q4-1 9 2 6-2 9 2l-2 4q-4 0-6 1l-4 4Q2 21 4 10z" fill="#ff9a1f" />
    <path d="M22 5q9 0 10 10 0 8-8 14 12-2 11-14 2 3 2 7 5-8-1-14Q32 5 28-2 27 3 22 5z" fill="#ffd53a" opacity=".75" />
  </>) },
  { id: "thunderbird", art: (<>
    <path d="M4 6q4 2 6 9Q13 3 24 0q10-2 18 2l1 4q1 1 5 2l-3 3q4 10-2 20A23 20 0 0 1-1 30Q-5 20 1 13q4-3 3-7z" fill="url(#bird)" />
    <path d="M12 14q0-11 15-14-3 5 2 12" fill="#1b6fd6" stroke="#b18bf3" strokeWidth="1" />
    <circle cx="22" cy="23" r="12" fill="#cfe8fb" /><path d="M12 17l11 8 10-8q-10-8-21 0z" fill="#fff" /><path d="M12 17l11 8 10-8" stroke="#9ec5ea" />
    <path d="M5 12q-5 14 6 22 5 5 13 3Q9 34 10 18" fill="#3e97ee" opacity=".6" /><circle cx="24" cy="7" r="1.200" fill="#0c2d66" />
  </>) },
  { id: "files", art: (<>
    <rect x=".5" y=".5" width="43" height="43" rx="5" fill="#9b937f" stroke="#b8b2a2" /><path d="M1 43L43 1v38q0 4-4 4z" fill="#a9a18e" opacity=".5" />
    <path d="M6 11q0-2 2-2h10l3 3h9v6H6z" fill="#ddd8ca" /><path d="M6 15h13l3-2h14q2 0 2 2v19q0 2-2 2H8q-2 0-2-2z" fill="#faf8f6" />
  </>) },
  { id: "rhythmbox", art: (<>
    <rect x="4" y="0" width="36" height="44" rx="4" fill="#e2dfd3" /><circle cx="22" cy="22" r="16" fill="#2b2f37" /><circle cx="22" cy="22" r="13" stroke="#4a4e58" strokeWidth="2" fill="#f1bd2b" /><circle cx="22" cy="22" r="5.500" fill="#2c2f34" />
  </>) },
  { id: "writer", running: true, active: true, art: (<>
    <path d="M8 0h18l14 14v26q0 4-4 4H8q-4 0-4-4V4q0-4 4-4z" fill="#1873a6" /><path d="M4 22h36v18q0 4-4 4H8q-4 0-4-4z" fill="#45a0cf" />
    <path d="M9 3h15l13 12v23q0 3-3 3H9q-2 0-2-3V6q0-3 2-3z" fill="#fff" /><path d="M30 0h9v10z" fill="#0d6590" />
    <Lines color="#1378b4" rows={[[10, 16, 8], [10, 20, 8], [10, 24, 8], [10, 28, 24], [10, 32, 24], [10, 36, 18]]} />
    <rect x="20" y="16" width="14" height="10" fill="#1378b4" /><rect x="21" y="17" width="12" height="8" fill="#8cc9ea" /><path d="M21 25l4-5 3 3 2-2 3 4z" fill="#333" /><circle cx="31" cy="18.500" r="1.500" fill="#f4b929" />
  </>) },
  { id: "store", art: (<g transform="translate(0 -2.500)">
    <rect x=".5" y="6.500" width="43" height="36" rx="3.500" fill="#f2652c" stroke="#f79268" /><path d="M1 25h42v14q0 3-3 3H4q-3 0-3-3z" fill="#f58b5c" opacity=".7" />
    <path d="M15 8.500Q15 1 22 1t7 7.500" stroke="#f6dfc4" strokeWidth="2" /><path d="M13.500 36l8.500-23 8.500 23" stroke="#fff" strokeWidth="5" /><rect x="8" y="26" width="28" height="4.500" rx="2" fill="#fff" /><path d="M9 28h26" stroke="#f8bfa4" strokeWidth=".8" />
  </g>) },
  { id: "help", art: (<>
    <circle cx="22" cy="22" r="22" fill="#248ae0" /><path d="M0 23.500h44a22 21 0 0 1-44 0z" fill="#4eaaea" /><circle cx="22" cy="22" r="21.500" stroke="#5fb2ee" strokeWidth=".8" />
    <T x="23" y="35" size="36" anchor="middle" weight={400} fill="#fff">?</T>
  </>) },
  { id: "terminal", running: true, art: (<>
    <rect x=".5" y="4.500" width="43" height="35" rx="4" fill="#4c4c4c" stroke="#727272" /><path d="M6.500 9.500l5 2.700-5 2.700" stroke="#fff" strokeWidth="1.700" /><path d="M13 18h7.500" stroke="#fff" strokeWidth="1.600" />
  </>) },
  { id: "ladybug", running: true, art: (<>
    <path d="M16 12l5-12M26 12q5-5 4-15M32 17q6-4 12-3M30 27l11-3M28 33l4 9M16 40l-4 4M4 28l-4-5M10 16l-9-2" stroke="#111" strokeWidth="1.700" />
    <g transform="translate(1 0)"><path d="M17 12q9-4 14 5 3 6-2 11z" fill="#141414" /><ellipse cx="14.500" cy="27" rx="13" ry="14" fill="url(#lady)" /><path d="M16 12q12 4 14 17-10-5-14-17z" fill="#141414" />
      <path d="M25 20L4 37" stroke="#1a0a08" strokeWidth="1.200" /><circle cx="8" cy="24" r="3" fill="#190a09" /><circle cx="15" cy="34" r="3" fill="#190a09" /><circle cx="18" cy="24" r="2.200" fill="#190a09" /><circle cx="24" cy="34" r="2" fill="#190a09" /><circle cx="12" cy="17" r="2" fill="#190a09" /><circle cx="19" cy="14" r="1" fill="#fff" /><circle cx="29" cy="26" r="1" fill="#fff" /></g>
  </>) },
  { id: "alert", running: true, art: (<>
    <circle cx="22" cy="22" r="22" fill="#df1a3c" /><path d="M0 24h44a22 20.500 0 0 1-44 0z" fill="#ee3450" /><circle cx="22" cy="22" r="21.500" stroke="#f07a8d" strokeWidth=".8" />
    <path d="M20 8h4.200l-.5 19h-3.200z" fill="#fff" /><circle cx="22" cy="33.500" r="2.700" fill="#fff" />
  </>) },
  { id: "disc", art: (<>
    <circle cx="22" cy="22" r="22" fill="#d3d3d3" /><path d="M22 22L2 31a22 22 0 0 0 36 6z" fill="#dedede" /><path d="M22 22L22 0a22 22 0 0 1 17 8z" fill="#cacaca" /><path d="M22 22L3 13l5-6zM22 22l19 9-5 6z" fill="#f7f7f7" />
    <circle cx="22" cy="22" r="7.500" fill="#f6f6f4" stroke="#b7b19b" /><circle cx="22" cy="22" r="3" fill="#444" />
  </>) },
];

/* ---------- host status icons ---------- */

const HOST_ICONS = [
  (<><rect x=".5" y=".5" width="25" height="31" rx="2" fill="url(#blue)" stroke="#1e7fd0" /><circle cx="13" cy="12.500" r="10.500" fill="#fff" /><path d="M15.500 16.500L13 21q-3 7-9.500 7.500 1-7 7-9z" fill="#0f62c0" stroke="#0f62c0" strokeLinejoin="round" /><circle cx="13" cy="12.500" r="3.200" fill="#0f5fb0" /></>),
  (<><circle cx="16" cy="16" r="15.500" fill="url(#blue)" stroke="#1e7fd0" /><circle cx="16" cy="16" r="4" fill="#0b55a8" /><circle cx="16" cy="16" r="1.500" fill="#333" /></>),
  (<><rect x="14" y="3.500" width="16" height="20" rx="2" fill="#868686" /><path d="M23 8h7M23 12h7M23 16h7M23 20h7" stroke="#575757" strokeWidth="1.500" /><path d="M13 19v4q0 3 3 3h12q3 0 3-3V10M22 26v4M13.500 30.500h18" stroke="#6f6f6f" strokeWidth="2" /><path d="M1 10.500h6L15 1v30L7 21.500H1z" fill="url(#blue)" stroke="#1e7fd0" /><rect x="13.500" y="9.500" width="7" height="11" fill="#6fd0ff" stroke="#1e7fd0" /></>),
  (<><rect x="9.500" y="1" width="21" height="17" fill="url(#deep)" stroke="#fff" strokeWidth="2" /><path d="M24 20h7" stroke="#fff" strokeWidth="2" /><rect x="2" y="10" width="22" height="18" fill="url(#deep)" stroke="#fff" strokeWidth="2" /><path d="M4 31h17" stroke="#fff" strokeWidth="2.500" /></>),
  (<><path d="M1 31q3-1 3-5Q7 12 17 8l7 7q-3 11-15 13-4 2-8 3z" fill="url(#blue)" stroke="#2386d6" /><path d="M17 7l6-6.500 8.500 7.500-6.500 7z" fill="#f3f3f3" stroke="#bbb" /><path d="M22 5.500l2.500 2M25.500 8.500l2 2" stroke="#333" strokeWidth="2" /></>),
  (<><path d="M1 5h12l3-4h13q2 0 2 3v27H1z" fill="#767676" /><path d="M1 7h30v24H1z" fill="#868686" opacity=".7" /></>),
  (<><rect x="1.500" y="1.300" width="29" height="24" fill="url(#deep)" stroke="#fff" strokeWidth="2.400" /><rect x="8" y="7" width="16" height="12" stroke="#fff" strokeWidth="2" /><path d="M4 28h24M8 30.500h16" stroke="#fff" strokeWidth="2.400" /></>),
  (<><rect x="1.500" y="9" width="25" height="18.500" fill="url(#deep)" stroke="#fff" strokeWidth="2.200" /><path d="M4 31h20" stroke="#fff" strokeWidth="2.500" /><path d="M6 2l6 4V1h19v15H12v-4l-6 3z" fill="#9aa5f8" stroke="#5560c8" /></>),
  (<><path d="M12 4q6-5 14-3M3 13q-2 9 0 13M13 27l4 4.500h4v-5" stroke="#58b41d" strokeWidth="4.500" /><ellipse cx="17" cy="16.500" rx="12" ry="12.500" fill="#7ad42c" stroke="#2b7c12" transform="rotate(-25 17 16.500)" /><path d="M1 8Q-2 2 3 0q7-2 8 5l5 4-6 6z" fill="#8fe03d" stroke="#2b7c12" /><circle cx="4" cy="3.500" r="1.600" fill="#fff" stroke="#111" strokeWidth=".8" /><path d="M9 16q4 2 8 7 2-8 6-11" stroke="#28540c" strokeWidth="2.500" /><rect x="25" y="0" width="7" height="32" fill="url(#meter)" stroke="#000" strokeWidth="2" /></>),
  (<><path d="M14 1q10-3 16 3 4 9-3 17-8 12-19 10Q-1 28 1 17 5 4 14 1z" fill="url(#blue)" stroke="#2386d6" /><path d="M13 2q-3 6 1 11" stroke="#2386d6" /><circle cx="24" cy="7.500" r="3" fill="#0c4b97" /><path d="M13 13l8-3v4h4l6 7-12 11-1-5 3-4-4-4-4 1z" fill="#8be04a" stroke="#3b9b17" /></>),
  (<><rect x=".5" y=".5" width="31" height="31" rx="2" fill="url(#blue)" stroke="#1e7fd0" /><path d="M12.500 7.500h7v8.500h5L16 25l-8.500-9h5z" fill="#00328f" /></>),
];

/* ---------- application ---------- */

const HOST_MENU = [["File", 61.5], ["Machine", 107.5], ["View", 75.5], ["Input", 81], ["Devices", 102], ["Help", 60]];
const MENU = [["File", 40], ["Edit", 43.5], ["View", 49], ["Insert", 55], ["Format", 66], ["Styles", 56], ["Table", 53], ["Form", 52], ["Tools", 52.5], ["Window", 69.5], ["Help", 40]];

export default function App() {
  return (
    <Screen>
      <GlobalStyle />
      <Defs />
      <HostTitle>
        <Svg>
          <rect width="24" height="24" fill="#343a48" /><path d="M4 24q7-5 4-13h6q3-1 5-8h5v8q-6 1-7 4l-5 9z" fill="#f9a12c" /><circle cx="8" cy="9.500" r="4" fill="#f2641c" /><path d="M10 13q4 1 4 5l-2 6H8q4-5 2-11z" fill="#ffd36b" />
          <rect width="9.500" height="7.500" fill="#eee" /><T x="1" y="6.300" size="6.500" fill="#333">64</T>
        </Svg>
        <HostTitleText>Ubuntu 20.04 [Running] - Oracle VM VirtualBox</HostTitleText>
        <HostButtons>
          <Svg w={16} h={16}><path d="M0 8h15.500" stroke="#8f8f8f" /></Svg>
          <Svg w={16} h={16}><rect x="1" y="3.700" width="11.500" height="11" rx="2" stroke="#8f8f8f" strokeWidth="1.200" /><path d="M4 .8h8q3.300 0 3.300 3.300v8" stroke="#8f8f8f" strokeWidth="1.200" /></Svg>
          <Svg w={16} h={16}><path d="M.5.5l15 15M15.500.5l-15 15" stroke="#8a8a8a" strokeWidth="1.100" /></Svg>
        </HostButtons>
      </HostTitle>
      <HostMenu>
        {HOST_MENU.map(([label, w]) => <HostMenuItem key={label} $w={w}>{label}</HostMenuItem>)}
      </HostMenu>
      <TopBar>
        <TopLeft>
          <Activities>Activities</Activities>
          <Svg w={12} h={15}><path d="M0 .5h9l3 3V14.500H0z" fill="#eee" /><Lines t={1} color="#333" rows={[[2, 4, 6], [2, 6, 8], [2, 8, 8], [2, 10, 8], [2, 12, 5]]} /></Svg>
          <AppName>LibreOffice Writer</AppName>
          <Svg w={9} h={5}><path d="M0 0h9L4.500 5z" fill="#f2f2f2" /></Svg>
        </TopLeft>
        <Clock>{"9 Nov  16:04"}</Clock>
        <TopRight>
          <Svg w={15} h={15}><g fill="#f2f2f2"><rect x="5" y="1" width="5" height="4" rx="1" /><rect x="0" y="9.500" width="5" height="4.500" rx="1" /><rect x="10" y="9.500" width="5" height="4.500" rx="1" /></g><path d="M7.500 5v2.500M2.500 10V7.500h10V10" stroke="#f2f2f2" /></Svg>
          <Svg w={15} h={15}><path d="M0 5h3l4-4v13l-4-4H0z" fill="#f2f2f2" /><path d="M9 4.500q2.500 3 0 6" stroke="#f2f2f2" strokeWidth="1.300" /><path d="M11.300 2.500q4.500 5 0 10" stroke="#888" strokeWidth="1.200" /></Svg>
          <Svg w={11} h={15}><rect x="1" y="1.500" width="9" height="12.500" rx="1.500" stroke="#f2f2f2" strokeWidth="1.300" /><path d="M3.500.5h4" stroke="#f2f2f2" /><rect x="2.500" y="8" width="6" height="4.500" fill="#f2f2f2" /></Svg>
          <Svg w={10} h={5}><path d="M0 0h10L5 5z" fill="#f2f2f2" /></Svg>
        </TopRight>
      </TopBar>
      <Guest>
        <Dock>
          {DOCK.map((d) => (
            <DockItem key={d.id} $running={d.running} $active={d.active}><Svg s={44}>{d.art}</Svg></DockItem>
          ))}
          <AppsGrid>{Array.from({ length: 9 }, (_, i) => <AppsDot key={i} />)}</AppsGrid>
        </Dock>
        <Writer>
          <WriterTitle>
            <WriterName>Untitled 1 - LibreOffice Writer</WriterName>
            <WriterButtons>
              <Svg w={82} h={20}>
                <path d="M0 12.500h8" stroke="#fff" strokeWidth="1.200" /><rect x="34.500" y="8.500" width="5" height="5" stroke="#fff" strokeWidth="1.200" /><path d="M36 6.500h5.500V12" stroke="#888" />
                <circle cx="72" cy="10" r="9.500" fill="#e95420" /><path d="M68.500 6.500l7 7M75.500 6.500l-7 7" stroke="#fff" strokeWidth="1.500" />
              </Svg>
            </WriterButtons>
          </WriterTitle>
          <MenuBar>
            {MENU.map(([label, w]) => <MenuItem key={label} $w={w}>{label}</MenuItem>)}
            <MenuClose><Svg w={9} h={9}><path d="M1 1l7 7M8 1L1 8" stroke="#444" strokeWidth="1.400" /></Svg></MenuClose>
          </MenuBar>
          <MenuRule />
          <Toolbar $h={38}><Tools items={STANDARD} /></Toolbar>
          <Toolbar $h={40}>
            <Slot $gap={0}><Grip /></Slot>
            <ComboBox width={144} gap={6} value="Default Style" track={0.35} />
            <Tools items={FORMAT_A} />
            <ComboBox width={144} gap={3} value="Liberation Se" track={0.25} />
            <ComboBox width={85} gap={8} value="12" />
            <Tools items={FORMAT_B} />
            <Slot $gap={3}><Pressed $w={33}><PressedPart $w={31}><TextTool name="left" /></PressedPart></Pressed></Slot>
            <Tools items={FORMAT_C} />
            <Slot $gap={3}><Pressed $w={44}><PressedPart $w={31}><TextTool name="bullets" /></PressedPart><PressedPart $w={11} $split><Arrow /></PressedPart></Pressed></Slot>
            <Tools items={FORMAT_D} />
          </Toolbar>
          <Workspace>
            <Canvas>
              <RulerRow>
                <TabKind />
                <RulerSlot><Ruler /></RulerSlot>
              </RulerRow>
              <Page>
                <Corners><Corner /><Corner $right /></Corners>
                <Heading>Applications of publisher in ROS2</Heading>
                <Bullets>
                  <Bullet>To control the system real time</Bullet>
                  <Bullet><span>To inform system about <Misspelt>updaated</Misspelt> environment</span></Bullet>
                  <Bullet>Internal communication of the system</Bullet>
                  <Bullet>to control the actuator position and velocity for their motion</Bullet>
                  <Bullet>to perform action in sequence</Bullet>
                  <Bullet>to handle emergency stopping situationS<Caret /></Bullet>
                </Bullets>
              </Page>
            </Canvas>
            <ScrollTrack><ScrollThumb /></ScrollTrack>
            <Splitter><SplitHandle><Svg w={6} h={8}><path d="M1 0l5 4-5 4z" fill="#fff" /></Svg></SplitHandle></Splitter>
            <Sidebar>
              <Svg><Cog cx={12} cy={12} r={11} /></Svg>
              <SideRule />
              <SideButton $h={32} $on><Svg><Sheet x={2} y={2} w={20} h={20} /><rect x="5" y="8.500" width="14" height="7" rx="3.500" fill="#3d92ea" /><circle cx="15.500" cy="12" r="3.200" fill="#fff" stroke="#3d92ea" strokeWidth=".7" /></Svg></SideButton>
              <SideButton $h={37}><Svg><Sheet /></Svg></SideButton>
              <SideButton $h={33}><Svg><T x="1" y="17" size="22">A</T><Brush /></Svg></SideButton>
              <SideButton $h={38}><Svg><path d="M2 2l17 1v5L1 17z" fill="#eee" stroke="#888" strokeWidth=".8" /><path d="M4 3l10 1-9 4z" fill="#37a3cf" /><Scene x={2.5} y={4.5} w={20} h={16.5} /></Svg></SideButton>
              <SideButton $h={32}><Svg><circle cx="12" cy="12" r="10" fill="#454d63" stroke="#8d8d8d" strokeWidth="2.400" /><circle cx="12" cy="12" r="9.700" stroke="#d9d9d9" strokeWidth=".8" /><path d="M12 5.500l1 5 4.500 1.500-4 1.500 1.500 4-3-2.500-3 2.500 1.500-4-4-1.500 4.500-1.500z" fill="#eee" /><path d="M15.500 4.500l-2 7.500-8-3 8-.5z" fill="#dd2f2f" /></Svg></SideButton>
            </Sidebar>
          </Workspace>
          <Toolbar $h={39} $pb={2}><Tools items={NUMBERING} /></Toolbar>
          <StatusBar>
            <StatusCell $w={258} $pl={10}>Page 1 of 1</StatusCell>
            <StatusCell $w={379.5} $pl={8}>48 words, 279 characters</StatusCell>
            <StatusCell $w={274} $pl={8}>Default Style</StatusCell>
            <StatusCell $w={274.5} $pl={3} $center>English (USA)</StatusCell>
            <StatusCell $w={67.5} />
            <StatusCell $w={29.5} $center><Svg w={15} h={12}><path d="M2.500 1v10M0 1h5M0 11h5" stroke="#888" strokeWidth="1.200" /><path d="M8.500 8.500V10.500h6V8.500" stroke="#888" /></Svg></StatusCell>
            <StatusCell $w={28.5} $center><Svg w={14} h={12}><rect x=".5" y=".5" width="13" height="10" fill="#eee" stroke="#999" /><path d="M5.500 1.500h3v3.500h2.300L7 9.500 3.200 5h2.300z" fill="#f08a1c" stroke="#c05c00" strokeWidth=".6" /></Svg></StatusCell>
            <StatusCell $w={29.5} />
            <StatusCell $w={240} $pl={3} $center>Level 1</StatusCell>
            <StatusCell $w={75.5} $pl={11.5}>
              <Svg w={56} h={12}><path d="M.7 1.300h4.500l3 3v6.500H.7z" stroke="#d0560b" strokeWidth="1.500" /><g stroke="#999" strokeWidth="1.100"><path d="M15 1.500h4l3.500 3v6.500H15zM24.500 1.500h4l3.500 3v6.500h-7.500zM46 11h-7V4.500l3-3h4zM46 11h8V4.500l-3-3h-5z" /></g></Svg>
            </StatusCell>
            <StatusCell $w={143.5} $pl={9}>
              <Svg w={126} h={12}><path d="M0 6.500h9M117 6.500h9M121.500 2v9" stroke="#777" strokeWidth="1.200" /><path d="M15 6h97" stroke="#8a8a8a" strokeWidth="1.800" /><path d="M36 3v6" stroke="#777" strokeWidth="2" /><circle cx="63" cy="6.500" r="4.600" fill="#f3f3f3" stroke="#8a8a8a" /></Svg>
            </StatusCell>
            <StatusCell $w={48} $pl={7.5} $last>100%</StatusCell>
          </StatusBar>
        </Writer>
      </Guest>
      <HostStatus>
        {HOST_ICONS.map((art, i) => <Svg key={i} s={32}>{art}</Svg>)}
        <HostKey>Right Ctrl</HostKey>
      </HostStatus>
    </Screen>
  );
}
